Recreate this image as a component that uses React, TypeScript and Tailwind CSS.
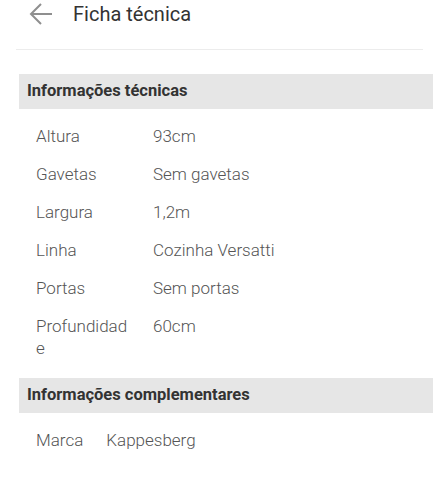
import React from "react";

const tecnicas = [
  { label: "Altura", value: "93cm" },
  { label: "Gavetas", value: "Sem gavetas" },
  { label: "Largura", value: "1,2m" },
  { label: "Linha", value: "Cozinha Versatti" },
  { label: "Portas", value: "Sem portas" },
  { label: "Profundidade", value: "60cm" },
];

const complementares = [{ label: "Marca", value: "Kappesberg" }];

export default function App() {
  return (
    <div className="w-[439px] h-[480px] bg-white font-['Roboto',sans-serif] overflow-hidden">
      {/* Header */}
      <div className="flex items-center h-[28px] pl-[29px]">
        <svg width="24" height="22" viewBox="0 0 24 22" className="text-[#8f8f8f]">
          <path d="M23 11H2M12 1L2 11l10 10" fill="none" stroke="currentColor" strokeWidth="2" />
        </svg>
        <h1 className="ml-[20px] text-[20px] text-[#333]">Ficha técnica</h1>
      </div>
      <div className="mx-[16px] mt-[21px] border-t border-[#ececec]" />

      {/* Informações técnicas */}
      <div className="mt-[24px] ml-[19px] mr-[6px] h-[35px] bg-[#e6e6e6] flex items-center pl-[8px]">
        <h2 className="text-[16.5px] font-bold text-[#333]">Informações técnicas</h2>
      </div>
      <div className="mt-[8px] ml-[36px]">
        {tecnicas.map((row) => (
          <div key={row.label} className="flex py-[8px] text-[17px] leading-[22px] text-[#555] font-light">
            <div className="w-[96px] break-all">{row.label}</div>
            <div className="ml-[21px]">{row.value}</div>
          </div>
        ))}
      </div>

      {/* Informações complementares */}
      <div className="mt-[11px] ml-[19px] mr-[6px] h-[35px] bg-[#e6e6e6] flex items-center pl-[8px]">
        <h2 className="text-[16.5px] font-bold text-[#333]">Informações complementares</h2>
      </div>
      <div className="mt-[8px] ml-[36px]">
        {complementares.map((row) => (
          <div key={row.label} className="flex py-[8px] text-[17px] leading-[22px] text-[#555] font-light">
            <div>{row.label}</div>
            <div className="ml-[23px]">{row.value}</div>
          </div>
        ))}
      </div>
    </div>
  );
}
